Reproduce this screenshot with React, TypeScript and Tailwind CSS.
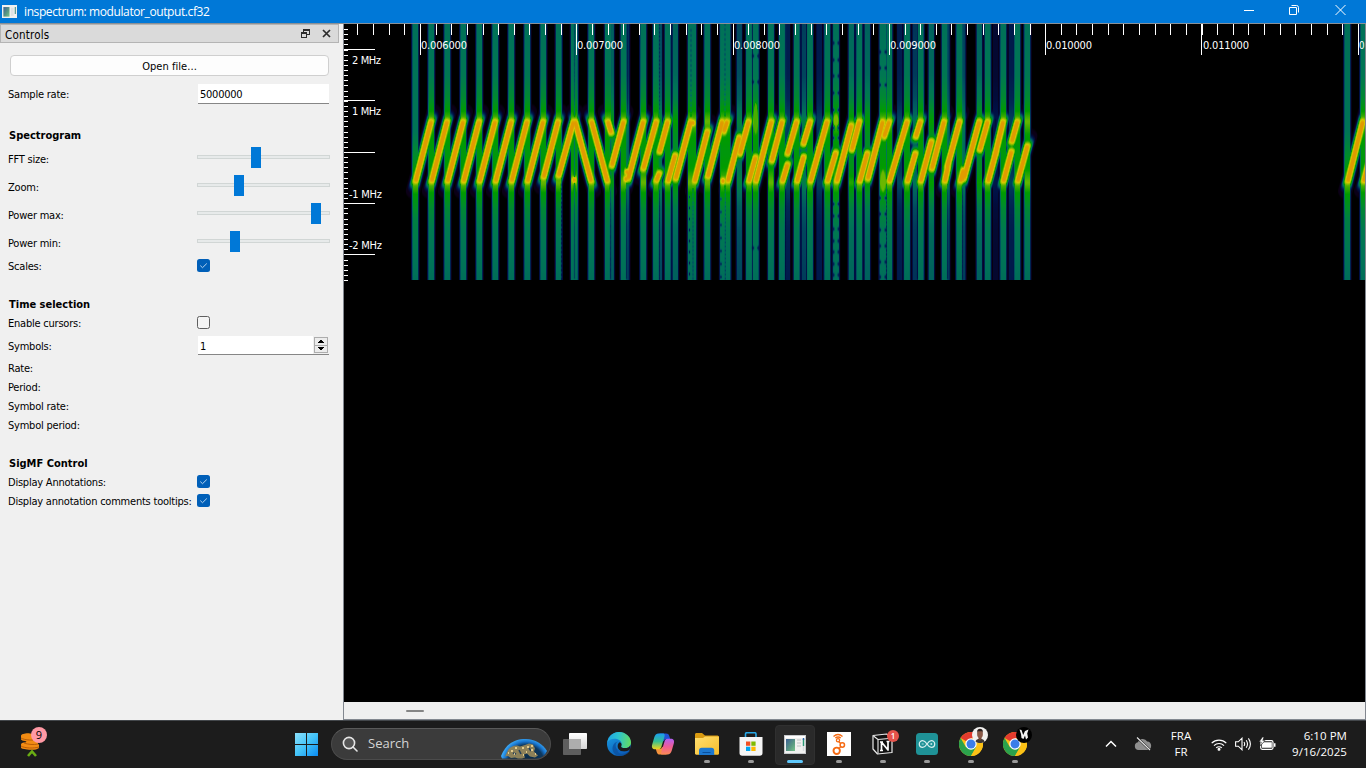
import React from "react";

const ui = "font-['DejaVu_Sans_Condensed','DejaVu_Sans',sans-serif]";

/* ---------- spectrogram data ---------- */

type Column = [x: number, width: number, level: number];

const columns: Column[] = [
  [431.3, 6, 1], [447.3, 6, 1], [463.3, 6, 1], [479.3, 6, 1], [495.3, 6, 1],
  [511.3, 6, 1], [527.3, 6, 1], [543.3, 6, 1], [558.7, 6, 1], [574.3, 7, 1],
  [591.3, 6, 1], [608.3, 7, 1], [612.5, 3, 0.8], [623.6, 6, 1], [627.5, 4, 0.55], [643.3, 6, 1],
  [656, 6, 1], [660, 4, 0.7], [667.7, 6, 1], [675.3, 5.5, 0.85], [692, 8.5, 1],
  [707.3, 6, 1], [723, 6, 1], [727.5, 6, 1], [739.3, 5.5, 0.65], [749, 6, 1], [755.7, 6, 1],
  [771, 6, 1], [782, 6, 1], [787.7, 5, 0.4], [796.7, 6, 1], [804, 5, 0.6],
  [810, 6, 1], [819.3, 6, 0.38], [827.3, 6, 1], [836, 6, 1], [851.3, 5.5, 0.9],
  [859.3, 6, 1], [867.3, 5.5, 0.85], [883, 7, 1], [889.3, 6, 1], [899.7, 5.5, 0.4],
  [907, 6, 1], [915, 5, 0.55], [920.7, 6, 1], [931.3, 5.5, 0.85], [944.7, 6, 1],
  [948.5, 3, 0.5], [959.3, 6, 1], [963.6, 4, 0.6], [979.3, 5.5, 0.85], [987.7, 6, 1],
  [995.7, 6, 0.24], [1003.3, 6, 1], [1011.3, 5.5, 0.38], [1017.3, 6, 1],
  [1027.3, 6, 1], [1363.3, 6, 1],
];

const onsetColumns = [415.3, 1347.3];

const TOP = 122;
const BOTTOM = 180.5;

const chirps: [number, number, number, number][] = [
  [415.8, BOTTOM, 431, TOP], [431.8, BOTTOM, 447, TOP], [447.8, BOTTOM, 463, TOP],
  [463.8, BOTTOM, 479, TOP], [479.8, BOTTOM, 495, TOP], [495.8, BOTTOM, 511, TOP],
  [511.8, BOTTOM, 527, TOP], [527.8, BOTTOM, 543, TOP], [543.8, 176.5, 558, TOP],
  [558.8, 175, 573.5, TOP], [575.2, TOP, 591, BOTTOM], [591.6, TOP, 607.2, BOTTOM],
  [608, TOP, 611, 132], [612, 165, 623.5, TOP], [628.5, 178, 643.2, TOP],
  [643.5, 168, 656.2, TOP], [656.6, 180, 659, 174], [659.8, 151, 667.6, TOP],
  [668.2, BOTTOM, 675, 156], [675.8, 178, 690.7, TOP], [694.8, BOTTOM, 707.3, 132],
  [708, 176, 722.2, TOP], [724, 131, 727, TOP], [728, BOTTOM, 739.2, 138],
  [740, 153, 748.5, TOP], [749.2, BOTTOM, 755.4, 158], [756, BOTTOM, 771.2, TOP],
  [772, 160, 782, TOP], [782.7, BOTTOM, 787.3, 165], [787.7, 153, 796.6, TOP],
  [797.3, BOTTOM, 803.5, 157.5], [803.7, 143, 810, TOP], [810.7, BOTTOM, 827, TOP],
  [827.7, BOTTOM, 835.6, 153.5], [837, BOTTOM, 851.2, 126], [852, 149, 859.2, TOP],
  [860, BOTTOM, 867.2, 154], [868, 178, 882.7, TOP], [884.3, 136, 889, TOP],
  [889.7, BOTTOM, 907, TOP], [907.7, BOTTOM, 915.2, 154], [916, 136, 920.3, TOP],
  [921, BOTTOM, 931.3, 142], [932, 168, 944, TOP], [945, BOTTOM, 947.7, 168],
  [947.5, 166, 959.5, TOP], [960.7, BOTTOM, 963.2, 171], [964, 178, 979.2, TOP],
  [980, 149, 987.6, TOP], [988.3, BOTTOM, 995.7, 153], [995.7, 153, 1003, TOP],
  [1003.7, BOTTOM, 1011.3, 152], [1012, 141, 1017.3, TOP], [1018, BOTTOM, 1027.3, 146.5],
  [1348, BOTTOM, 1362.7, TOP], [1364, BOTTOM, 1379, TOP],
];

/* stroke width, grey level, overshoot along the line */
const halo: [number, string, number][] = [
  [14.5, "#1a1a1a", 11],
  [12, "#303030", 7],
  [10.8, "#585858", 5],
  [9.6, "#7c7c7c", 3.5],
  [8.6, "#a2a2a2", 2.5],
  [7.4, "#c4c4c4", 1.6],
  [6, "#e2e2e2", 0.8],
  [3.9, "#ffffff", -0.6],
];

const blobs: [number, number][] = [
  [574.3, 180], [627, 172], [626, 179], [693, 123], [723, 181], [819.3, 148.5],
  [899.7, 146], [962.5, 179], [963.5, 171],
];

const dotted: [x: number, y1: number, y2: number, dash: string][] = [
  [574.5, 24, 118, "1 2.2"], [574.5, 130, 280, "1 2"],
  [610.5, 132, 280, "1 1.2"], [561.5, 184, 280, "1.5 3"], [626.5, 190, 280, "1 2"],
  [659.5, 190, 280, "1 1.4"], [691, 30, 118, "1 4"], [693, 190, 280, "1 3"],
  [689.5, 196, 280, "2 9"], [725, 24, 118, "1 4"], [725.3, 186, 280, "1 3"],
  [721, 198, 280, "2 11"], [785.5, 190, 280, "1 1.4"], [917.5, 130, 280, "1 2"],
  [886.5, 190, 280, "1 3"], [947.5, 190, 280, "1 2"], [962.5, 186, 280, "1 1.5"],
  [995.5, 120, 150, "1 2"], [659.5, 24, 118, "1 3"], [627.5, 24, 118, "1 2"],
];

const beads: [number, number][] = [
  [833.4, 204], [833.4, 216], [833.4, 229], [833.4, 241], [833.4, 252], [833.4, 264], [833.4, 275],
  [838.6, 204], [838.6, 216], [838.6, 229], [838.6, 241], [838.6, 252], [838.6, 264], [838.6, 275],
  [833.4, 128], [838.6, 128], [833.4, 138], [838.6, 138], [833.4, 110], [838.6, 110],
  [833.4, 93], [838.6, 93], [833.4, 76], [838.6, 76], [833.4, 60], [838.6, 60], [833.4, 43], [838.6, 43],
  [880, 198], [885.6, 198], [880, 214], [885.6, 214], [880, 230], [885.6, 230],
  [880, 246], [885.6, 246], [880, 262], [885.6, 262], [880, 277], [885.6, 277],
  [880, 68], [885.6, 68], [880, 85], [885.6, 85], [880, 52], [885.6, 52],
  [753, 248], [758.4, 248], [753, 82], [758.4, 82], [753, 56], [758.4, 56],
];

const TABLE_R = "0 .045 0 0 0 0 0 0 .42 .84 .88";
const TABLE_G = "0 0 .06 .17 .34 .46 .55 .61 .72 .79 .61";
const TABLE_B = "0 .09 .27 .34 .38 .34 .17 0 0 0 0";

function Spectrogram() {
  const major = [0, 1, 2, 3, 4, 5, 6];
  const minorX = Array.from({ length: 65 }, (_, i) => Math.round(420.3 + (i - 4) * 15.63 - 0.3)).filter((x) => x < 1365);
  const minorY = Array.from({ length: 50 }, (_, i) => Math.round(152 + (i - 24) * 5.12)).filter((y) => y < 281);
  return (
    <svg className="block h-[678px] w-[1021px]" viewBox="344 24 1021 678">
      <defs>
        <filter id="cmap" filterUnits="userSpaceOnUse" x="344" y="24" width="1021" height="256" colorInterpolationFilters="sRGB">
          <feGaussianBlur stdDeviation="0.5 0.8" />
          <feComponentTransfer>
            <feFuncR type="table" tableValues={TABLE_R} />
            <feFuncG type="table" tableValues={TABLE_G} />
            <feFuncB type="table" tableValues={TABLE_B} />
            <feFuncA type="table" tableValues="1 1" />
          </feComponentTransfer>
        </filter>
        <linearGradient id="col" gradientUnits="userSpaceOnUse" x1="0" y1="24" x2="0" y2="280">
          <stop offset="0" stopColor="#7c7c7c" />
          <stop offset=".2" stopColor="#828282" />
          <stop offset=".29" stopColor="#969696" />
          <stop offset=".34" stopColor="#b2b2b2" />
          <stop offset=".38" stopColor="#cccccc" />
          <stop offset=".43" stopColor="#b4b4b4" />
          <stop offset=".5" stopColor="#ababab" />
          <stop offset=".57" stopColor="#b4b4b4" />
          <stop offset=".62" stopColor="#cccccc" />
          <stop offset=".66" stopColor="#b2b2b2" />
          <stop offset=".72" stopColor="#949494" />
          <stop offset=".8" stopColor="#848484" />
          <stop offset="1" stopColor="#7a7a7a" />
        </linearGradient>
        <linearGradient id="onset" gradientUnits="userSpaceOnUse" x1="0" y1="24" x2="0" y2="280">
          <stop offset="0" stopColor="#7c7c7c" />
          <stop offset=".42" stopColor="#808080" />
          <stop offset=".54" stopColor="#a0a0a0" />
          <stop offset=".62" stopColor="#cccccc" />
          <stop offset=".68" stopColor="#aaaaaa" />
          <stop offset=".76" stopColor="#8c8c8c" />
          <stop offset="1" stopColor="#7a7a7a" />
        </linearGradient>
      </defs>
      <rect x="344" y="24" width="1021" height="678" fill="#000" />
      <g filter="url(#cmap)">
        <rect x="344" y="10" width="1040" height="280" fill="#000" />
        {[...onsetColumns.map((x): Column => [x, 6, 1]), ...columns].map(([x, w, l], i) => (
          <g key={i} className="mix-blend-lighten">
            <rect x={x - w / 2 - 1.2} y="10" width={w + 2.4} height="290" fill="#383838" fillOpacity={l} />
            <rect x={x - w / 2 + 0.1} y="10" width={w - 0.2} height="290" fill={i < 2 ? "url(#onset)" : "url(#col)"} fillOpacity={l} />
          </g>
        ))}
        {dotted.map(([x, y1, y2, dash], i) => (
          <line key={i} x1={x} x2={x} y1={y1} y2={y2} stroke="#000" strokeWidth="1.3" strokeDasharray={dash} strokeOpacity=".8" />
        ))}
        {beads.map(([x, y], i) => (
          <ellipse key={i} cx={x} cy={y} rx="1.4" ry="1.8" fill="#303030" fillOpacity=".85" />
        ))}
        <ellipse cx="836" cy="120" rx="2.4" ry="6" fill="#d0d0d0" />
        <ellipse cx="883" cy="181" rx="2.4" ry="11" fill="#cccccc" />
        <ellipse cx="755.7" cy="118" rx="2" ry="16" fill="#c4c4c4" />
        {halo.map(([w, c, ext], k) => (
          <g key={k} className="mix-blend-lighten" stroke={c} strokeWidth={w} strokeLinecap="round">
            {chirps.map(([x1, y1, x2, y2], i) => {
              const len = Math.hypot(x2 - x1, y2 - y1);
              const ux = ((x2 - x1) / len) * ext;
              const uy = ((y2 - y1) / len) * ext;
              return <line key={i} x1={x1 - ux} y1={y1 - uy} x2={x2 + ux} y2={y2 + uy} />;
            })}
          </g>
        ))}
        {blobs.map(([x, y], i) => (
          <g key={i} className="mix-blend-lighten">
            <ellipse cx={x} cy={y} rx="3.2" ry="4" fill="#dcdcdc" />
            <ellipse cx={x} cy={y} rx="1.8" ry="2.3" fill="#fff" />
          </g>
        ))}
      </g>
      <g fill="#fff" shapeRendering="crispEdges">
        {minorX.map((x) => (
          <rect key={x} x={x} y="24" width="1" height="11" />
        ))}
        {[420, 576, 733, 889, 1045, 1201, 1358].map((x) => (
          <rect key={x} x={x} y="24" width="1" height="31" />
        ))}
        {minorY.map((y) => (
          <rect key={y} x="344" y={y} width="4" height="1" />
        ))}
        {[49, 100, 152, 203, 254].map((y) => (
          <rect key={y} x="344" y={y} width="31" height="1" />
        ))}
      </g>
      <g fill="#fff" fontSize="11" className={ui}>
        {major.slice(0, 6).map((i) => (
          <text key={i} x={Math.round(421 + i * 156.3)} y="49" textLength="46" lengthAdjust="spacing">{`0.0${String(6 + i).padStart(2, "0")}000`}</text>
        ))}
        <text x="1359" y="49" textLength="5.5" lengthAdjust="spacingAndGlyphs">0</text>
        <text x="352" y="64" textLength="29">2 MHz</text>
        <text x="352" y="115" textLength="29">1 MHz</text>
        <text x="349" y="198" textLength="33">-1 MHz</text>
        <text x="349" y="249" textLength="33">-2 MHz</text>
      </g>
    </svg>
  );
}

/* ---------- controls dock ---------- */

function Row({ label, h = "h-[19px]", shift = "", children }: { label: string; h?: string; shift?: string; children?: React.ReactNode }) {
  return (
    <div className={`flex items-center pl-2 ${h}`}>
      <span className={`w-[189px] shrink-0 tracking-[-0.22px] whitespace-nowrap ${shift}`}>{label}</span>
      {children}
    </div>
  );
}

function Heading({ children, cls }: { children: string; cls: string }) {
  return <h2 className={`flex items-center pt-[2px] pl-[9px] font-bold ${cls}`}>{children}</h2>;
}

function Slider({ handle }: { handle: string }) {
  return (
    <div className="relative -mt-[3px] h-[21px] w-[133px]">
      <div className="mt-[8px] h-[4px] w-full border border-[#d1d6d5] bg-[#e7eaea]" />
      <div className={`absolute top-0 h-[21px] w-[10px] bg-[#0078d7] ${handle}`} />
    </div>
  );
}

function Check({ on = true, shift = "" }: { on?: boolean; shift?: string }) {
  return on ? (
    <span className={`flex h-[13px] w-[13px] items-center justify-center rounded-[2.5px] bg-[#005fb8] ${shift}`}>
      <svg width="9" height="9" viewBox="0 0 9 9" fill="none" stroke="#b5d3ee" strokeWidth="1">
        <path d="M1.3 4.6 3.5 6.7 7.8 2.5" />
      </svg>
    </span>
  ) : (
    <span className={`h-[13px] w-[13px] rounded-[2.5px] border border-[#5f5f5f] bg-[#f4f4f4] ${shift}`} />
  );
}

function Controls() {
  return (
    <aside className={`w-[343px] shrink-0 bg-[#f0f0f0] text-[11px] leading-[14px] text-black ${ui}`}>
      <header className="flex h-[19px] w-[339px] items-center border border-[#b4b4b4] bg-[#dadada] pl-1">
        <span className="flex-1 pt-[3px] text-[11.5px] tracking-[0.2px]">Controls</span>
        <svg width="9" height="9" viewBox="0 0 9 9" fill="none" stroke="#2b2b2b" className="mr-3" shapeRendering="crispEdges">
          <path d="M2.5 3V.5h6v5H6M2.5 1.5h6M.5 3.5h5v5h-5zM.5 4.5h5" />
        </svg>
        <svg width="9" height="9" viewBox="0 0 9 9" stroke="#2b2b2b" strokeWidth="1.7" className="mr-[7px]">
          <path d="m1 1 7 7M8 1 1 8" />
        </svg>
      </header>
      <div className="mt-3 ml-[10px] flex h-[21px] w-[319px] items-center justify-center rounded-[4px] border border-[#cfcfcf] bg-[#fdfdfd] pt-[2px] tracking-[0.05px]">
        Open file...
      </div>
      <div className="mt-1" />
      <Row label="Sample rate:" h="h-7" shift="pt-[2px]">
        <div className="-mt-px ml-px flex h-[20px] w-[131px] items-center border-b border-[#868686] bg-white pt-[3px] pl-[2px] tracking-[-0.25px]">5000000</div>
      </Row>
      <Heading cls="mt-[17px] h-5">Spectrogram</Heading>
      <Row label="FFT size:" h="h-7" shift="pt-[2px]"><Slider handle="left-[54px]" /></Row>
      <Row label="Zoom:" h="h-7" shift="pt-[2px]"><Slider handle="left-[37px]" /></Row>
      <Row label="Power max:" h="h-7" shift="pt-[2px]"><Slider handle="left-[114px]" /></Row>
      <Row label="Power min:" h="h-7" shift="pt-[2px]"><Slider handle="left-[33px]" /></Row>
      <Row label="Scales:" h="h-[18px]" shift="pt-[2px]"><Check shift="-mt-px" /></Row>
      <Heading cls="mt-[19px] h-5">Time selection</Heading>
      <Row label="Enable cursors:" h="h-[18px]" shift="pt-[2px]"><Check on={false} shift="-mt-px" /></Row>
      <Row label="Symbols:" h="h-[27px]" shift="pt-[2px]">
        <div className="ml-px flex h-[19px] w-[131px] items-center justify-between border-b border-[#868686] bg-white pl-[2px]">
          <span className="pt-[3px]">1</span>
          <span className="flex h-full w-[16px] items-center justify-center bg-[#f0f0f0]">
            <svg width="14" height="16" viewBox="0 0 14 16" shapeRendering="crispEdges">
              <path d="M.5.5h13v15H.5zM.5 8h13" fill="#ececec" stroke="#adadad" />
              <path d="M7 3h1v1h1v1h1v1H4V5h1V4h1V3zM4 10h6v1H9v1H8v1H6v-1H5v-1H4z" fill="#000" />
            </svg>
          </span>
        </div>
      </Row>
      <Row label="Rate:" />
      <Row label="Period:" />
      <Row label="Symbol rate:" />
      <Row label="Symbol period:" />
      <Heading cls="mt-[18px] h-[19px]">SigMF Control</Heading>
      <Row label="Display Annotations:" shift="pt-[2px]"><Check /></Row>
      <Row label="Display annotation comments tooltips:" shift="pt-[2px]"><Check /></Row>
    </aside>
  );
}

/* ---------- taskbar ---------- */

function AppIcon() {
  return (
    <svg width="22" height="19" viewBox="0 0 22 19">
      <rect x=".5" y=".5" width="21" height="18" fill="#f1f1ef" stroke="#c8cacc" />
      <path d="M1 1h20v2H1z" fill="#fff" />
      <rect x="2" y="4" width="9" height="12" fill="url(#scr)" />
      <path d="M13 5h4M13 8h4M13 11h4" stroke="#cfd2d4" strokeWidth="1.6" />
      <path d="M19.5 4v12" stroke="#d8dcde" strokeWidth="1.4" />
      <path d="M19.5 4v7" stroke="#2b9a76" strokeWidth="1.4" />
      <path d="M19.5 3v2" stroke="#2a63ad" strokeWidth="1.4" />
      <defs>
        <linearGradient id="scr" x1="0" y1="0" x2="1" y2="1">
          <stop offset="0" stopColor="#3c5f94" />
          <stop offset=".6" stopColor="#5a9a82" />
          <stop offset="1" stopColor="#79c48b" />
        </linearGradient>
      </defs>
    </svg>
  );
}

function Slot({ children, state = "" }: { children: React.ReactNode; state?: "" | "run" | "active" }) {
  return (
    <div className="flex w-11 justify-center">
      <div className={`relative flex h-10 w-10 items-center justify-center ${state === "active" ? "rounded-[4px] border border-[#303030] bg-[#2a2a2a]" : ""}`}>
        <div className="-mt-px">{children}</div>
        {state === "run" && <span className="absolute bottom-[2px] left-[17px] h-[3px] w-[6px] rounded-full bg-[#999]" />}
        {state === "active" && <span className="absolute bottom-px left-[11px] h-[3px] w-4 rounded-full bg-[#5fc8fb]" />}
      </div>
    </div>
  );
}

function Edge() {
  return (
    <svg width="24" height="24" viewBox="0 0 24 24">
      <defs>
        <linearGradient id="e1" x1="0" y1=".3" x2="1" y2=".4">
          <stop offset="0" stopColor="#1fa5e4" />
          <stop offset=".45" stopColor="#2cc3cf" />
          <stop offset="1" stopColor="#62dc62" />
        </linearGradient>
        <linearGradient id="e2" x1="0" y1="0" x2=".6" y2="1">
          <stop offset="0" stopColor="#1aa0e6" />
          <stop offset="1" stopColor="#0c5fb8" />
        </linearGradient>
      </defs>
      <circle cx="12" cy="12" r="12" fill="url(#e2)" />
      <path d="M.3 10.3C1.5 4.200 6.300 0 12 0c6.700 0 12 5 12 10.600 0 3.300-2.500 5.500-5.700 5.500-3.400 0-4.800-1.200-4-2.400.9-1.300.7-5.300-4.300-6.700C5.900 5.900 1.800 7.400.3 10.300z" fill="url(#e1)" />
      <path d="M8.800 12.200c-1 5.700 4.800 8.800 9.400 7.700 1.500-.4 2.800-1 3.600-1.400.7-.4 1.200.2.8.8-2.300 3.300-6.300 5-10.600 4.700C7.300 23 4.600 18.800 5.700 14.700 6.500 11.700 8.700 10 11 9.600c-1 .6-2 1.500-2.200 2.600z" fill="#0b4f9e" fillOpacity=".75" />
      <path d="M14.300 13.700c-.8 1.200.6 2.400 4 2.400 2.300 0 4.200-1 5-2.900.4 2-.1 4.300-1.700 5.400-4.300 2.300-10.600.8-10.900-4.100-.1-2.100.9-3.900 2.200-4.300 1.700.7 2 2.600 1.400 3.500z" fill="#1c1c1c" />
      <path d="M22.300 18.200c-4 2.300-9.800 1.700-11.800-1.300-.6 5 5.300 6.600 11 2.700z" fill="#0d62bd" />
    </svg>
  );
}

function Copilot() {
  return (
    <svg width="24" height="24" viewBox="0 0 24 24">
      <defs>
        <linearGradient id="c1" x1="0" y1="0" x2="0" y2="1">
          <stop offset="0" stopColor="#1a9df0" />
          <stop offset=".5" stopColor="#35bf92" />
          <stop offset="1" stopColor="#f4d41a" />
        </linearGradient>
        <linearGradient id="c2" x1="0" y1="0" x2="0" y2="1">
          <stop offset="0" stopColor="#b160f5" />
          <stop offset=".5" stopColor="#ee5c96" />
          <stop offset="1" stopColor="#fb8a55" />
        </linearGradient>
      </defs>
      <path d="M8.500 1.500H15c1.800 0 2.700.7 3.200 2.300L19.200 7H15.500c-1.500 0-2.200.8-2.600 2.200L9 7z" fill="#2152d6" />
      <path d="M15.500 22.500H9c-1.800 0-2.700-.7-3.200-2.300L4.800 17h3.700c1.500 0 2.200-.8 2.600-2.200L15 17z" fill="#f5933c" />
      <path d="M13.700 1.500H7.600C5.300 1.500 4 3 3.300 5.200L1.200 12.500c-.9 3 .3 4.800 3 4.800h3.300c1.700 0 2.400-.9 2.900-2.500l3.100-10.300c.4-1.500.1-2.700-.8-3z" fill="url(#c1)" />
      <path d="M10.300 22.500h6.100c2.300 0 3.600-1.500 4.300-3.700l2.100-7.300c.9-3-.3-4.800-3-4.800h-3.300c-1.700 0-2.400.9-2.900 2.500l-3.100 10.300c-.4 1.500-.6 2.700-.2 3z" fill="url(#c2)" />
    </svg>
  );
}

function Chrome({ avatar }: { avatar: "photo" | "dark" }) {
  return (
    <div className="relative h-6 w-6">
      <svg width="24" height="24" viewBox="0 0 24 24">
        <circle cx="12" cy="12" r="12" fill="#fbc116" />
        <path d="M12 12 1.600 6A12 12 0 0 1 22.400 6z" fill="#e33b2e" />
        <path d="M1.600 6A12 12 0 0 0 12 24l5.200-9H12L6.800 15z" fill="#2ba24c" />
        <path d="M12 6h10.400A12 12 0 0 1 12 24l5.200-9z" fill="#fbc116" />
        <circle cx="12" cy="12" r="5.700" fill="#fff" />
        <circle cx="12" cy="12" r="4.500" fill="#3b7de9" />
      </svg>
      <svg width="16" height="16" viewBox="0 0 16 16" className="absolute -top-[5px] left-[13px]">
        {avatar === "photo" ? (
          <>
            <circle cx="8" cy="8" r="8" fill="#f2f1ef" />
            <path d="M3.500 14.600C4 12.400 5.500 12 8 12s4 .4 4.500 2.600A8 8 0 0 1 3.500 14.600z" fill="#3c3634" />
            <path d="M6.500 9.500h3v3l-1.500 1-1.500-1z" fill="#6e4638" />
            <ellipse cx="8" cy="7" rx="2.900" ry="4" fill="#8a5a48" />
            <path d="M5 6c-.2-3 1-4.300 3-4.300S11.200 3 11 6l-.7-1.700H5.700z" fill="#2a201e" />
          </>
        ) : (
          <>
            <circle cx="8" cy="8" r="8" fill="#000" />
            <path d="m3.500 2.500 2 .5 1.700 5L9 4l3.500-1.500-1.300 4 .8 4-2 2-1-4-1.500 3.500-2-1L5 7z" fill="#f4f4f4" />
          </>
        )}
      </svg>
    </div>
  );
}

function Taskbar() {
  return (
    <footer className="flex h-12 items-center border-t border-[#43474b] bg-[#1c1c1c] font-['Open_Sans','Noto_Sans',sans-serif] text-white">
      <div className="relative -mt-[2px] ml-5 h-8 w-8">
        <svg width="32" height="32" viewBox="0 0 32 32">
          <g fill="#f28c13">
            <path d="M1 8c0-2 5-3 9-2.500s9 1 8 3.500v3c-2 2-8 2-11 1.500S1 12.500 1 11z" />
            <path d="M6 13.500c3-2 9-1.500 12 0v5c-3 2-9 1.500-12 0z" />
            <path d="M1 16.500c0-2 5-2.500 9-2s9 1 9 2.500v3c-2 2-8 2-12 1.500s-6-1-6-2z" />
          </g>
          <path d="M1 10c4 2.500 13 2.500 17 1M4 15c4 1.500 10 2 14 1M1 18c4 2.500 13 2.500 18 1" stroke="#b85d08" fill="none" />
          <path d="m8 28 4-4.500L16 28" stroke="#6aad14" strokeWidth="2.600" fill="none" />
        </svg>
        <span className="absolute -top-px left-[11px] flex h-4 w-4 items-center justify-center rounded-full bg-[#ff99a4] text-[11px] leading-none text-black">9</span>
      </div>
      <div className="-mt-px ml-[232px] flex w-11 justify-center">
        <svg width="23" height="23" viewBox="0 0 23 23" fill="url(#win)">
          <defs>
            <linearGradient id="win" gradientUnits="userSpaceOnUse" x1="0" y1="0" x2="23" y2="23">
              <stop offset="0" stopColor="#8be0fb" />
              <stop offset=".5" stopColor="#43c3f8" />
              <stop offset="1" stopColor="#0a8bf3" />
            </linearGradient>
          </defs>
          <path d="M0 0h11v11H0zM12 0h11v11H12zM0 12h11v11H0zM12 12h11v11H12z" />
        </svg>
      </div>
      <div className="-mt-px ml-[3px] flex h-8 w-[220px] items-center overflow-hidden rounded-full border border-[#4b4b4b] border-t-[#5a5a5a] bg-[#3b3b3b] pl-[10px]">
        <svg width="16" height="16" viewBox="0 0 16 16" fill="none" stroke="#e6e6e6" strokeWidth="1.600">
          <circle cx="7" cy="7" r="5.600" fill="#555" />
          <path d="m11 11 4 4" strokeLinecap="round" />
        </svg>
        <span className="ml-[10px] flex-1 text-[13px] text-[#d4d4d4]">Search</span>
        <svg width="48" height="22" viewBox="0 0 48 22" className="mt-[9px] mr-[2px]">
          <defs>
            <radialGradient id="sky" gradientUnits="userSpaceOnUse" cx="26" cy="25" r="25">
              <stop offset="0" stopColor="#0a2740" />
              <stop offset=".72" stopColor="#0d3860" />
              <stop offset=".86" stopColor="#1976cf" />
              <stop offset="1" stopColor="#3aa7f5" />
            </radialGradient>
          </defs>
          <path d="M1 18C6 6 14 1 26 1c9 0 17 5 21 12-2 4-5 6.500-9 7.500H2z" fill="url(#sky)" />
          <path d="M8 12c2-3 5-4.500 9-4.500l3 1 5-1.500 4-1.500 4 1 2 4-1 3 4 4-3 2-5-1-3-3-3 1 1 3-3 1h-4l-3-1-4 .500-3-2-3 .500z" fill="#8d8159" />
          <path d="m13 15 3 1M19 12l2 4M29 10l2 3" stroke="#26405a" strokeWidth="1.600" />
          <path d="M11 13h2M15 10h2M14 16h1M22 10h2M27 9h2M31 8h2M26 14h1M31 12h2M23 17h1M8 15h1M35 16h1" stroke="#ffe29a" strokeWidth="1.300" />
        </svg>
      </div>
      <div className="ml-[2px] flex items-center">
        <Slot>
          <svg width="24" height="22" viewBox="0 0 24 22">
            <defs>
              <linearGradient id="tv" x1="0" y1="0" x2="0" y2="1">
                <stop offset="0" stopColor="#fff" />
                <stop offset="1" stopColor="#d6d6d6" />
              </linearGradient>
            </defs>
            <rect x="6" y="0" width="18" height="16" rx=".8" fill="url(#tv)" />
            <rect x="0" y="6" width="18" height="16" rx=".8" fill="#6a6a6a" fillOpacity=".85" />
            <path d="M6 6h12v10H6z" fill="#adadad" />
          </svg>
        </Slot>
        <Slot><Edge /></Slot>
        <Slot><Copilot /></Slot>
        <Slot state="run">
          <svg width="24" height="22" viewBox="0 0 24 22">
            <defs>
              <linearGradient id="fold" x1="0" y1="0" x2="1" y2="1">
                <stop offset="0" stopColor="#ffdf70" />
                <stop offset="1" stopColor="#f8bd2a" />
              </linearGradient>
            </defs>
            <path d="M0 1.500C0 .6.600 0 1.500 0H7l3 2.500h12c1 0 2 .6 2 1.500v6H0z" fill="#d99a10" />
            <path d="M0 5h8l2-1.500h14V20.500c0 .8-.5 1.200-1.200 1.200H1.200C.5 21.700 0 21.300 0 20.500z" fill="url(#fold)" />
            <path d="M4 22v-4.500c0-1.700 1-2.700 2.700-2.700h9.800c1.700 0 2.700 1 2.700 2.700V22z" fill="#1d78cf" />
            <path d="M7.500 19.500h8" stroke="#0a4f9b" />
          </svg>
        </Slot>
        <Slot state="run">
          <svg width="24" height="24" viewBox="0 0 24 24">
            <path d="M6.500 6V2c0-.8.5-1.300 1.300-1.300h7.900c.8 0 1.300.5 1.300 1.300v4" fill="none" stroke="#27a8e8" strokeWidth="1.600" />
            <path d="M.500 5h23v16c0 1.700-1 2.700-2.700 2.700H3.200C1.500 23.700.500 22.700.500 21z" fill="#f5f5f5" />
            <path d="M7 9.500h4.300v4.300H7z" fill="#f25022" />
            <path d="M12.300 9.500h4.300v4.300h-4.300z" fill="#7fba00" />
            <path d="M7 14.700h4.300V19H7z" fill="#00a4ef" />
            <path d="M12.300 14.700h4.300V19h-4.300z" fill="#ffb900" />
          </svg>
        </Slot>
        <Slot state="active"><AppIcon /></Slot>
        <Slot state="run">
          <svg width="24" height="24" viewBox="0 0 24 24" fill="none" stroke="#f56a12">
            <path d="M0 0h24v24H0z" fill="#fff" stroke="none" />
            <path d="M6.500 4.500c3-2.600 6-2.600 9 0M8.300 6c2-1.500 3.500-1.500 5.500 0" strokeWidth="1.400" />
            <circle cx="11" cy="8.300" r="1.600" strokeWidth="1.300" />
            <circle cx="15.300" cy="13" r="2.200" strokeWidth="1.500" />
            <circle cx="9.700" cy="18.800" r="3.200" strokeWidth="1.900" />
            <path d="m11.700 9.800 2.100 1.700M13.900 14.600l-2 1.900" strokeWidth="1.300" />
          </svg>
        </Slot>
        <Slot state="run">
          <svg width="22" height="22" viewBox="0 0 22 22" strokeLinejoin="round">
            <path d="M1 2.500 14.500 1 20 5v14.500L5.500 21 1 16z" fill="#111" stroke="#e9e9e9" strokeWidth="1.200" />
            <path d="M1.500 3 6 6.500v14M6 6.500 19.500 5.300" stroke="#e9e9e9" strokeWidth="1.100" fill="none" />
            <path d="M9.500 17.500V9l6.500 8V8.500M8 9h3M14.500 8.500h3M8 17.500h3" stroke="#fff" strokeWidth="1.700" fill="none" />
          </svg>
          <span className="absolute top-[5px] left-[24px] flex h-3 w-3 items-center justify-center rounded-full bg-[#e5534b] text-[8px] leading-none font-semibold">1</span>
        </Slot>
        <Slot state="run">
          <svg width="22" height="22" viewBox="0 0 22 22" fill="none">
            <rect width="22" height="22" rx="3.500" fill="#1f9297" />
            <path d="M11 11C9.500 8.700 8.300 7.600 6.700 7.600a3.400 3.400 0 0 0 0 6.800C8.300 14.400 9.500 13.300 11 11c1.500-2.300 2.700-3.400 4.300-3.400a3.400 3.400 0 0 1 0 6.800C13.700 14.400 12.500 13.300 11 11z" stroke="#d8efef" strokeWidth="1.300" />
            <path d="M5.700 11h2M14.300 11h2M15.300 10v2" stroke="#d8efef" strokeWidth=".8" />
          </svg>
        </Slot>
        <Slot state="run"><Chrome avatar="photo" /></Slot>
        <Slot state="run"><Chrome avatar="dark" /></Slot>
      </div>
      <div className="-mt-px flex flex-1 items-center justify-end pr-[19px]">
        <svg width="12" height="8" viewBox="0 0 12 8" fill="none" stroke="#fff" strokeWidth="1.500" className="mr-[17px]">
          <path d="M1 6.500 6 1.500l5 5" />
        </svg>
        <svg width="18" height="14" viewBox="0 0 18 14" className="mr-[18px]">
          <path d="M4.500 13a3.900 3.900 0 0 1-.6-7.700A5.200 5.200 0 0 1 13.200 4.500a4.300 4.300 0 0 1 .5 8.500z" fill="#8f8f8f" />
          <path d="m3.500 1 12.500 12" stroke="#1c1c1c" strokeWidth="2.400" />
          <path d="m3 .500 13 12.500" stroke="#e8e8e8" strokeWidth="1.100" />
        </svg>
        <div className="mr-[19px] w-[22px] text-center text-[11.500px] leading-4">FRA<br />FR</div>
        <svg width="16" height="13" viewBox="0 0 16 13" fill="none" stroke="#fff" strokeWidth="1.200" className="mr-2">
          <path d="M.700 5.200a10.300 10.300 0 0 1 14.600 0M3 7.600a7 7 0 0 1 10 0M5.200 9.900a4 4 0 0 1 5.600 0" />
          <circle cx="8" cy="11.300" r=".9" fill="#fff" />
        </svg>
        <svg width="17" height="14" viewBox="0 0 17 14" fill="none" stroke="#fff" strokeWidth="1.100" className="mr-[7px]">
          <path d="M.600 4.800h2.700L7 1.200v11.600L3.300 9.200H.600zM9 5q1.300 2 0 4M11.200 3.200q2.600 3.800 0 7.600M13.400 1.400q4 5.600 0 11.200" />
        </svg>
        <svg width="17" height="14" viewBox="0 0 17 14" className="mr-[15px]">
          <rect x="1.700" y="3.700" width="12.300" height="8.600" rx="1.500" fill="none" stroke="#fff" strokeWidth="1.200" />
          <path d="M3 5.200h9.800v5.600H3zM15 6.300h1.500v3.400H15z" fill="#fff" />
          <path d="M3.400 0 0 5h2.200L1.500 8.800 6 3.500H3.800L5 0z" fill="#fff" stroke="#1c1c1c" strokeWidth=".6" />
        </svg>
        <div className="w-[56px] text-right text-[11.500px] leading-4 tracking-[0.05px] whitespace-nowrap">
          <div className="flex justify-end">6:10 PM</div>
          <div className="flex justify-end">9/16/2025</div>
        </div>
      </div>
    </footer>
  );
}

export default function App() {
  return (
    <div className="flex h-[768px] w-[1366px] flex-col overflow-hidden bg-[#f0f0f0]">
      <header className="flex h-6 shrink-0 items-center border-b border-[#8a9096] bg-[#0078d7] pl-[2px] font-['Open_Sans','Noto_Sans',sans-serif] text-white">
        <svg width="15" height="13" viewBox="0 0 22 19" preserveAspectRatio="none" className="-mt-px">
          <rect width="22" height="19" fill="#f1f1ef" />
          <rect x="2" y="3" width="9" height="14" fill="url(#scr)" />
          <path d="M13 4h4v12h-4z" fill="#dfe3e4" />
          <path d="M19.500 3v10" stroke="#3a8a80" strokeWidth="1.500" />
        </svg>
        <span className="ml-[7px] flex-1 text-[12px] tracking-[-0.4px]">inspectrum: modulator_output.cf32</span>
        <svg width="103" height="12" viewBox="0 0 103 12" fill="none" stroke="#fff" className="mr-[19px] -mt-[3px]">
          <path d="M0 6.500h10" />
          <path d="M45.500 3.500h7v7h-7z" />
          <path d="M47.500 1.500h5q2 0 2 2v5" />
          <path d="m91.500 1 10 10M101.500 1l-10 10" />
        </svg>
      </header>
      <main className="flex min-h-0 flex-1">
        <Controls />
        <section className="flex w-[1023px] flex-col border-x border-[#82878f] bg-black">
          <Spectrogram />
          <div className="flex h-[18px] items-center border-b border-[#82878f] bg-[#efefef] pl-[62px]">
            <div className="h-[2px] w-[18px] rounded-full bg-[#858585]" />
          </div>
        </section>
      </main>
      <Taskbar />
    </div>
  );
}
